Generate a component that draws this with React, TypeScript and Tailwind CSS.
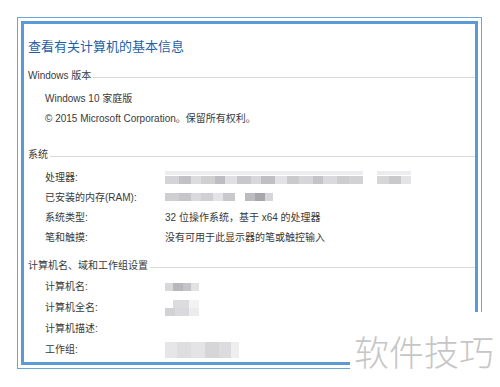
import React from 'react'

const font = { fontFamily: '"Liberation Sans", "Noto Sans CJK SC", sans-serif' }

// pixelated blocks standing in for the blurred values
function Mosaic({ cells, h }: { cells: [number, string][]; h: string }) {
  return (
    <div className={`flex blur-[0.6px] ${h}`}>
      {cells.map(([w, c], i) => (
        <div key={i} style={{ width: w, background: c }} />
      ))}
    </div>
  )
}

function Header({ text }: { text: string }) {
  return (
    <div className="flex items-center h-[16px] text-[10px] text-[#3a3a3a]">
      <span className="pr-[2px]">{text}</span>
      <div className="flex-1 h-px bg-[#d9d9d9] mt-[4px]" />
    </div>
  )
}

function Row({ label, children, h = 'h-[20px]' }: { label: string; children?: React.ReactNode; h?: string }) {
  return (
    <div className={`flex items-center ${h} text-[10px] text-[#3a3a3a]`}>
      <div className="w-[137px] pl-[17px]">{label}</div>
      <div className="flex-1">{children}</div>
    </div>
  )
}

const cpuCells: [number, string][] = [
  [14, '#d4d4d8'], [12, '#c2c2c6'], [10, '#dcdcdc'], [14, '#cfcfd2'], [10, '#bdbdc2'], [12, '#e0e0e2'],
  [14, '#c8c8cc'], [10, '#d8d8da'], [14, '#c0c0c4'], [12, '#e2e2e4'], [12, '#cacacd'], [14, '#d6d6d8'],
  [10, '#c4c4c8'], [14, '#dadadc'], [12, '#cdcdd0'], [14, '#d2d2d4'], [14, '#ffffff'], [12, '#d6d6d8'],
  [12, '#c9c9cc'], [10, '#e4e4e6'],
]
const ramCells: [number, string][] = [
  [14, '#cfcfd2'], [12, '#c6c6ca'], [10, '#dadadc'], [12, '#d0d0d4'], [10, '#e4e4e6'], [12, '#c9c9cd'],
  [10, '#ffffff'], [10, '#bcbcc0'], [10, '#a6a6ab'], [8, '#d6d6d8'],
]

export default function App() {
  return (
    <div className="relative w-[500px] h-[387px] bg-white overflow-hidden" style={font}>
      <div className="ml-[17px] mt-[17px] w-[465px] h-[352px] border border-[#6aa6dc] p-[3px]">
        <div className="h-full border-[3px] border-[#5b9bd5] pl-[4px]">
          <div className="mt-[13px] h-[20px] flex items-center text-[13px] text-[#1f5fa8]">
            查看有关计算机的基本信息
          </div>

          <div className="mt-[10px]">
            <Header text="Windows 版本" />
          </div>
          <div className="mt-[5px]">
            <div className="flex items-center h-[20px] pl-[17px] text-[10px] text-[#3a3a3a]">Windows 10 家庭版</div>
            <div className="flex items-center h-[20px] pl-[17px] text-[10px] text-[#3a3a3a]">
              © 2015 Microsoft Corporation。保留所有权利。
            </div>
          </div>

          <div className="mt-[18px]">
            <Header text="系统" />
          </div>
          <div className="mt-[5px]">
            <Row label="处理器:">
              <div className="flex flex-col gap-[1px]">
                <Mosaic h="h-[4px]" cells={cpuCells.map(([w, c]) => [w, c === '#ffffff' ? c : '#ececee'])} />
                <Mosaic h="h-[8px]" cells={cpuCells} />
              </div>
            </Row>
            <Row label="已安装的内存(RAM):">
              <Mosaic h="h-[8px]" cells={ramCells} />
            </Row>
            <Row label="系统类型:">32 位操作系统，基于 x64 的处理器</Row>
            <Row label="笔和触摸:">没有可用于此显示器的笔或触控输入</Row>
          </div>

          <div className="mt-[10px]">
            <Header text="计算机名、域和工作组设置" />
          </div>
          <div className="mt-[3px]">
            <Row label="计算机名:" h="h-[21px]">
              <Mosaic h="h-[8px]" cells={[[8, '#d8d8da'], [10, '#b8b8bc'], [8, '#c4c4c8'], [8, '#e2e2e4']]} />
            </Row>
            <Row label="计算机全名:" h="h-[21px]">
              <div className="flex flex-col">
                <Mosaic h="h-[8px]" cells={[[8, '#ffffff'], [16, '#dcdcde'], [10, '#f2f2f2']]} />
                <Mosaic h="h-[8px]" cells={[[10, '#d2d2d4'], [14, '#dadadc'], [10, '#ececee']]} />
              </div>
            </Row>
            <Row label="计算机描述:" h="h-[21px]" />
            <Row label="工作组:" h="h-[21px]">
              <Mosaic
                h="h-[16px]"
                cells={[[12, '#e6e6e8'], [14, '#dedee0'], [14, '#e4e4e6'], [14, '#d6d6d8'], [12, '#dcdcde'], [8, '#eeeeef']]}
              />
            </Row>
          </div>
        </div>
      </div>

      {/* watermark */}
      <div className="absolute left-[350px] top-[312px] w-[150px] h-[75px] bg-white">
        <div className="mt-[21px] ml-[4px] text-[35px] leading-[35px] text-[#c6c6c6] tracking-[0px]" style={{ fontFamily: '"Noto Sans CJK SC", sans-serif', fontWeight: 300 }}>
          软件技巧
        </div>
      </div>
    </div>
  )
}
